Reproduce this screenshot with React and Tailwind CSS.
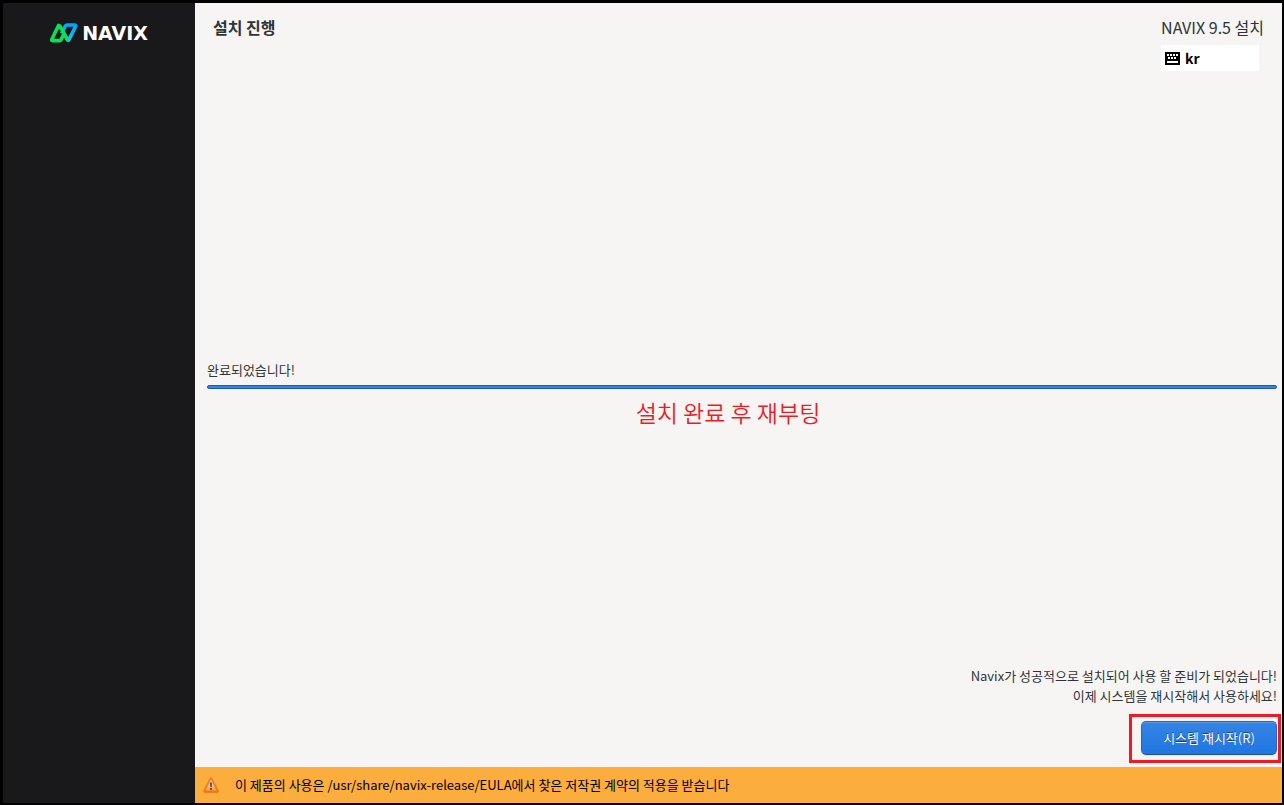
import React from "react";

function NavixMark() {
  return (
    <svg width="28" height="20" viewBox="0 0 28 20" fill="none" aria-hidden="true">
      <defs>
        <linearGradient id="navix-blue" x1="22" y1="0" x2="18" y2="20" gradientUnits="userSpaceOnUse">
          <stop offset="0" stopColor="#00a0ff" />
          <stop offset="1" stopColor="#0fd0ea" />
        </linearGradient>
      </defs>
      <path d="M11.600 10.500 15.200 3.200Q15.900 2 17.200 2H24.600Q26.300 2 25.600 3.500L19 16.600Q18.200 18 17.300 16.500L13.600 9.500" stroke="url(#navix-blue)" strokeWidth="3.600" strokeLinejoin="round" />
      <path d="M13.600 11.500 11.200 16.400Q10.600 17.600 9.500 17.600H2.600Q1.200 17.600 1.900 16.200L8.300 3Q9 1.800 9.900 3.100L17.600 17" stroke="#0be052" strokeWidth="3.600" strokeLinejoin="round" />
    </svg>
  );
}

function KeyboardIcon() {
  return (
    <svg width="15" height="13" viewBox="0 0 15 13" aria-hidden="true" shapeRendering="crispEdges">
      <rect width="15" height="13" rx="1" fill="#000" />
      <path
        d="M2 2h2v2H2zM5 2h2v2H5zM8 2h2v2H8zM11 2h2v2h-2zM3 5h2v2H3zM6 5h2v2H6zM9 5h2v2H9zM2 9h11v2H2z"
        fill="#fff"
      />
    </svg>
  );
}

function WarningIcon() {
  return (
    <svg width="16" height="16" viewBox="0 0 16 16" aria-hidden="true">
      <defs>
        <linearGradient id="warn-fill" x1="0" y1="0" x2="0" y2="1">
          <stop offset="0" stopColor="#f08a3c" />
          <stop offset="1" stopColor="#f57900" />
        </linearGradient>
        <linearGradient id="warn-inner" x1="0" y1="0" x2="0" y2="1">
          <stop offset="0" stopColor="#fbe0c4" />
          <stop offset="1" stopColor="#f79a4a" />
        </linearGradient>
      </defs>
      <path d="M7.2 1.1q.8-1.1 1.6 0l6.600 12.600q.4 1.600-.9 1.700H1.500Q.2 15.300.6 13.700z" fill="url(#warn-fill)" stroke="#e0701a" strokeWidth=".6" />
      <path d="M8 3 13.600 13.600H2.400z" fill="url(#warn-inner)" />
      <path d="M7 5.500h2L8.700 10H7.300z" fill="#43484a" />
      <rect x="7" y="11" width="2" height="1.800" rx=".6" fill="#43484a" />
    </svg>
  );
}

export default function App() {
  return (
    <div className="flex min-h-screen border-t-3 border-r-2 border-b-2 border-l-3 border-black bg-[#f6f5f4] font-['Noto_Sans_CJK_KR',sans-serif] text-[13px] leading-5 text-[#2e3436]">
      <aside className="flex w-48 shrink-0 items-start justify-center bg-[#19191b] pt-5">
        <div className="flex items-center gap-1">
          <NavixMark />
          <span className="font-['DejaVu_Sans',sans-serif] text-[19px] leading-5 font-bold text-white">NAVIX</span>
        </div>
      </aside>

      <div className="flex min-w-0 grow flex-col">
        <header className="flex items-start justify-between px-[18px] pt-3">
          <h1 className="text-[16px] leading-6 font-bold">설치 진행</h1>
          <div className="flex flex-col items-start gap-[6px]">
            <p className="text-[16px] leading-6">NAVIX 9.5 설치</p>
            <button
              type="button"
              aria-label="키보드 배열 kr"
              className="flex h-[26px] w-[98px] items-center gap-[5px] bg-white px-1 text-[14px] font-bold text-black"
            >
              <KeyboardIcon />
              kr
            </button>
          </div>
        </header>

        <main className="flex grow flex-col pr-[5px] pb-3 pl-3">
          <section className="flex grow flex-col justify-center pt-3">
            <p id="progress-label">완료되었습니다!</p>
            <div className="relative mt-[5px]">
              <div
                role="progressbar"
                aria-labelledby="progress-label"
                aria-valuenow={100}
                aria-valuemin={0}
                aria-valuemax={100}
                className="h-1 rounded-[2px] border border-[#1b5eb1] bg-[#3584e4]"
              />
              <p className="absolute inset-x-0 top-[11px] pr-7 text-center text-[23px] leading-8 font-[350] text-[#ed1c24]">
                설치 완료 후 재부팅
              </p>
            </div>
          </section>

          <section className="flex flex-col items-end gap-[15px]">
            <p className="text-right">
              Navix가 성공적으로 설치되어 사용 할 준비가 되었습니다!
              <br />
              이제 시스템을 재시작해서 사용하세요!
            </p>
            <div className="relative">
              <button
                type="button"
                className="h-[34px] w-[136px] rounded-[5px] border border-[#1b6acb] border-b-[#15539e] bg-linear-to-t from-[#1f76e1] to-[#3584e4] text-white shadow-[inset_0_1px_rgba(255,255,255,0.2),0_1px_2px_rgba(0,0,0,0.07)] text-shadow-[0_-1px_rgba(0,0,0,0.5)]"
              >
                시스템 재시작(R)
              </button>
              <div className="pointer-events-none absolute -top-[7px] -right-1 -bottom-2 -left-3 border-3 border-[#ed1c24]" />
            </div>
          </section>
        </main>

        <footer className="flex h-9 items-center gap-4 bg-[#fbad3d] px-2 text-black">
          <WarningIcon />
          <p>이 제품의 사용은 /usr/share/navix-release/EULA에서 찾은 저작권 계약의 적용을 받습니다</p>
        </footer>
      </div>
    </div>
  );
}
